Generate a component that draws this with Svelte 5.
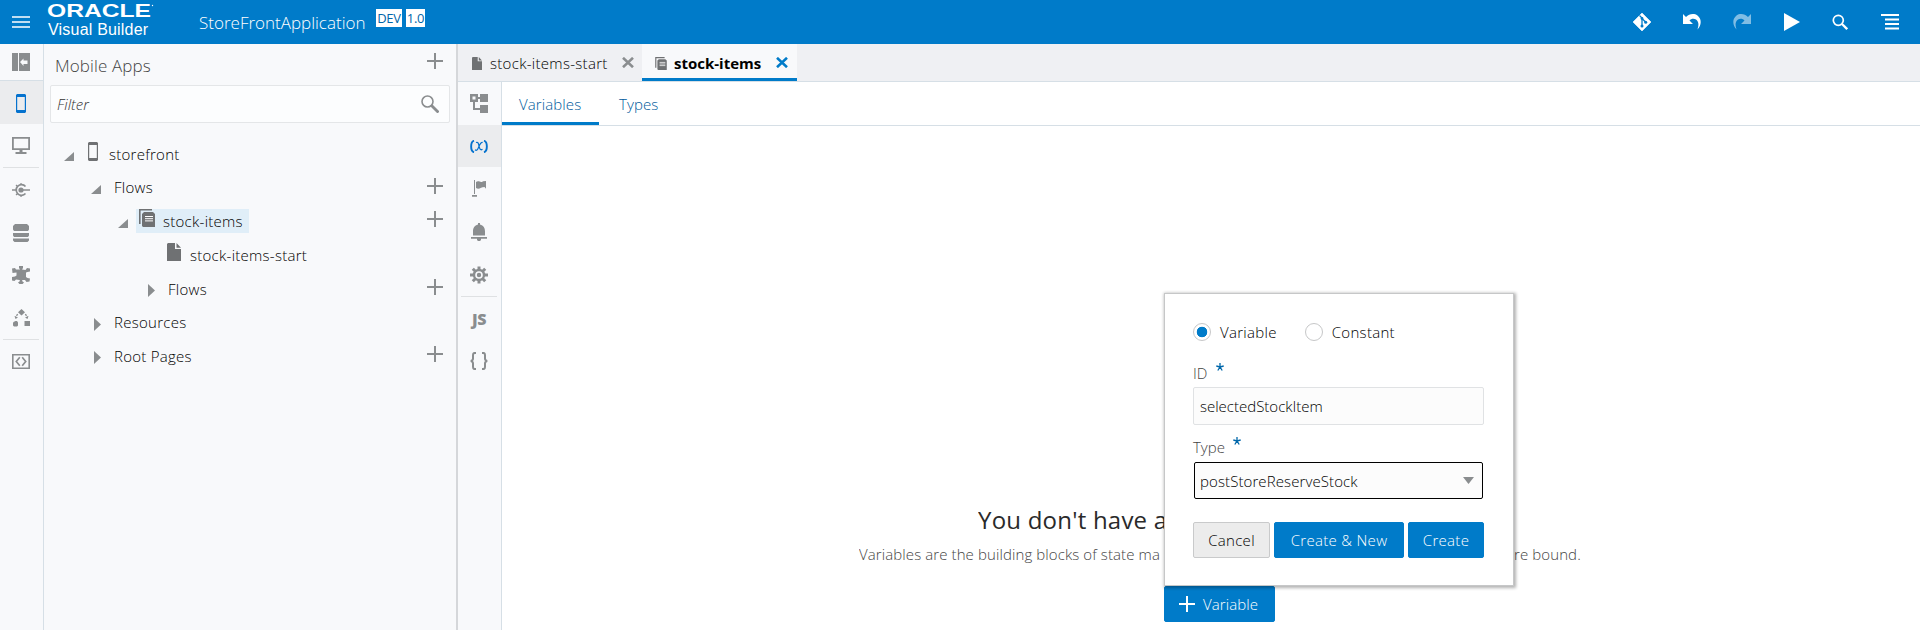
<script>
  let kind = $state('variable');
  let id = $state('selectedStockItem');
  const tree = [
    { label: 'storefront', pad: 20, open: true, icon: 'phone' },
    { label: 'Flows', pad: 47, open: true, plus: true },
    { label: 'stock-items', pad: 74, open: true, icon: 'flow', selected: true, plus: true },
    { label: 'stock-items-start', pad: 101, leaf: true, icon: 'page' },
    { label: 'Flows', pad: 101, open: false, plus: true },
    { label: 'Resources', pad: 47, open: false },
    { label: 'Root Pages', pad: 47, open: false, plus: true }
  ];
</script>

{#snippet plus()}
  <svg class="plus" width="16" height="16" viewBox="0 0 16 16"><path d="M7 0h2v7h7v2H9v7H7V9H0V7h7z" fill="currentColor" /></svg>
{/snippet}

{#snippet page(w, h)}
  <svg width={w} height={h} viewBox="0 0 14 18"><path d="M1 0h7v6h6v12H0V1zM9.500 0L14 4.700H9.500z" fill="currentColor" /></svg>
{/snippet}

{#snippet flow(w, h)}
  <svg width={w} height={h} viewBox="0 0 16 18">
    <path d="M.8 15V.8H13" fill="none" stroke="currentColor" stroke-width="1.6" />
    <path d="M5 3h9l2 2v13H4l-1-1V5z" fill="currentColor" />
    <path d="M6 7.500h8M6 9.700h8M6 11.900h8" stroke="#fff" stroke-width="1" />
  </svg>
{/snippet}

{#snippet phone()}
  <svg width="10" height="19" viewBox="0 0 10 19"><path fill-rule="evenodd" d="M1 0h8l1 1v17l-1 1H1l-1-1V1zM1.200 3v13h7.600V3z" fill="currentColor" /></svg>
{/snippet}

{#snippet cross()}
  <svg width="12" height="11" viewBox="0 0 12 11"><path d="M1 .8l10 9.400M11 .8L1 10.200" stroke="currentColor" stroke-width="2.600" /></svg>
{/snippet}

<div class="app">
  <header>
    <svg class="menu" width="18" height="12" viewBox="0 0 18 12"><path d="M0 1h18M0 6h18M0 11h18" stroke="#fff" stroke-width="1.700" /></svg>
    <div class="brand">
      <svg width="108" height="20" viewBox="0 0 108 20">
        <text x="0" y="15" textLength="104" lengthAdjust="spacingAndGlyphs" font-size="17.500" font-weight="700" fill="#fff">ORACLE</text>
        <circle cx="105.500" cy="3.500" r=".7" fill="#fff" />
      </svg>
      <span class="product">Visual Builder</span>
    </div>
    <span class="appname">StoreFrontApplication</span>
    <span class="badge dev">DEV</span>
    <span class="badge ver">1.0</span>
    <nav class="actions">
      <svg width="18" height="18" viewBox="0 0 18 18">
        <path d="M9 0l9 9-9 9-9-9z" fill="#fff" stroke="#fff" stroke-linejoin="round" stroke-width=".6" />
        <path d="M6.500 2.500L9 5v9M9 5.500l4 4" stroke="#007bc9" stroke-width="1.300" fill="none" />
        <circle cx="9" cy="5.500" r="1.400" fill="#007bc9" /><circle cx="9" cy="13" r="1.500" fill="#007bc9" /><circle cx="12.700" cy="9.200" r="1.500" fill="#007bc9" />
      </svg>
      <svg width="18" height="16" viewBox="0 0 18 16"><path d="M0 0l3 3C6-.2 11-1 14.500 1.500 19 5 18.500 11 14.500 15.500 16 11 15.800 7.500 13 5.500 11 4 8 4.500 6.500 6.500L10 10H0z" fill="#fff" /></svg>
      <svg class="faded" width="18" height="16" viewBox="0 0 18 16"><path transform="matrix(-1 0 0 1 18 0)" d="M0 0l3 3C6-.2 11-1 14.500 1.500 19 5 18.500 11 14.500 15.500 16 11 15.800 7.500 13 5.500 11 4 8 4.500 6.500 6.500L10 10H0z" fill="#fff" /></svg>
      <svg width="16" height="18" viewBox="0 0 16 18"><path d="M0 0l16 9L0 18z" fill="#fff" /></svg>
      <svg width="16" height="16" viewBox="0 0 16 16"><circle cx="6.300" cy="6.300" r="5" fill="none" stroke="#fff" stroke-width="1.700" /><path d="M10 10l5.200 5.200" stroke="#fff" stroke-width="2.300" /></svg>
      <svg width="18" height="16" viewBox="0 0 18 16"><path d="M0 1h18M4 5.500h14M4 10h14M4 14.500h14" stroke="#fff" stroke-width="1.800" /></svg>
    </nav>
  </header>

  <div class="body">
    <aside class="rail">
      <div class="cell top">
        <svg width="18" height="18" viewBox="0 0 18 18"><path fill-rule="evenodd" d="M0 0h6v18H0zM7 0h11v18H7zM8 9l3.500-3.500V7.500h4v3.500h-4v2z" fill="currentColor" /></svg>
      </div>
      <div class="cell active device">{@render phone()}</div>
      <div class="cell">
        <svg width="18" height="17" viewBox="0 0 18 17"><path fill-rule="evenodd" d="M0 0h18v13H0zM1.800 1.800v9.400h14.400V1.800zM7.500 13h3v2h-3zM3.500 15h11v2h-11z" fill="currentColor" /></svg>
      </div>
      <hr />
      <div class="cell">
        <svg width="18" height="14" viewBox="0 0 18 14"><path d="M0 7h4M9 7h9" stroke="currentColor" stroke-width="1.300" /><path d="M13.500 3.500A5.300 5.300 0 1 0 13.500 10.500" fill="none" stroke="currentColor" stroke-width="1.700" /><circle cx="9" cy="7" r="2.600" fill="currentColor" /><path d="M9 0v2M9 12v2M4 2l1.500 1.500M4 12l1.500-1.500" stroke="currentColor" stroke-width="1.200" /></svg>
      </div>
      <div class="cell">
        <svg width="16" height="18" viewBox="0 0 16 18"><path d="M2 0h12l2 2v3.500l-1 1.500H1L0 5.500V2zM0 9h16v2.500l-1 1.500H1l-1-1.500zM0 14.500h16v2L14.500 18h-13L0 16.500z" fill="currentColor" /></svg>
      </div>
      <div class="cell short">
        <svg width="18" height="18" viewBox="0 0 18 18"><path d="M7 0h4v2l-1 1.500 3.500.5L15 2l3 .5V5.500L15.500 6 14 6.500v4.500l1.500 1 2.500.5-.5 3-3 .5-1.500-2H10.500L10 15l2 1.500-1.500 1.500h-3L6 16.500 8 15l-.5-1L4 13.500 2.500 15 0 14.500V11l3-.5 1.500-1V6.500L.5 7 0 2.500 3 2l1 1.500h4L7 2z" fill="currentColor" /></svg>
      </div>
      <div class="cell">
        <svg width="17" height="18" viewBox="0 0 17 18"><path d="M8.500 0L12 3.300 8.500 6.600 5 3.300zM.500 13L2.500 12h1.500l1 1.500v3L4 17.500H1L0 16.500V14zM11.500 12h5.500v5H11.500z" fill="currentColor" /><path d="M4.700 5.200L2.500 8M12.300 5.200L14.500 8" stroke="currentColor" stroke-width="1.300" stroke-dasharray="2 1" /><path d="M1.500 7l1 3 2.500-1.500zM15.500 7l-1 3L12 8.500z" fill="currentColor" /></svg>
      </div>
      <hr />
      <div class="cell short">
        <svg width="18" height="15" viewBox="0 0 18 15"><path d="M.8.800h16.400v13.400H.8z" fill="none" stroke="currentColor" stroke-width="1.600" /><path d="M7.800 3.300L4.300 7.500l3.500 4.200M10.200 3.300l3.500 4.200-3.500 4.200" fill="none" stroke="currentColor" stroke-width="1.700" /></svg>
      </div>
    </aside>

    <section class="panel">
      <div class="title"><span>Mobile Apps</span>{@render plus()}</div>
      <div class="filter">
        <span>Filter</span>
        <svg width="18" height="18" viewBox="0 0 18 18"><circle cx="6.500" cy="6.500" r="5.500" fill="none" stroke="#8a8d8f" stroke-width="1.600" /><path d="M10.500 10.500l7 7" stroke="#8a8d8f" stroke-width="2.800" /></svg>
      </div>
      <ul>
        {#each tree as n}
          <li style:padding-left="{n.pad}px">
            <span class="arrow" class:shut={!n.open}>
              {#if n.leaf}
                <i></i>
              {:else if n.open}
                <svg width="10" height="9" viewBox="0 0 10 9"><path d="M10 0v9H0z" fill="#8a8d8f" /></svg>
              {:else}
                <svg width="7" height="13" viewBox="0 0 7 13"><path d="M0 0l7 6.500L0 13z" fill="#8a8d8f" /></svg>
              {/if}
            </span>
            <span class="node" class:selected={n.selected} class:plain={!n.icon}>
              {#if n.icon}
                <span class="ic {n.icon}">
                  {#if n.icon === 'phone'}{@render phone()}{:else if n.icon === 'flow'}{@render flow(16, 18)}{:else}{@render page(14, 18)}{/if}
                </span>
              {/if}
              <span class="label">{n.label}</span>
            </span>
            {#if n.plus}{@render plus()}{/if}
          </li>
        {/each}
      </ul>
    </section>

    <main>
      <div class="tabs">
        <div class="tab">{@render page(10, 13)}<span class="t1">stock-items-start</span>{@render cross()}</div>
        <div class="tab on">{@render flow(12, 13)}<span class="t2">stock-items</span>{@render cross()}</div>
      </div>
      <div class="work">
        <aside class="rail inner">
          <div class="cell">
            <svg width="18" height="19" viewBox="0 0 18 19"><path fill-rule="evenodd" d="M0 0h8v3h2V0h8v8h-8V5H8v3H5v6h5v-3h8v8h-8v-3H3V8H0zM2.500 2.500v3h3v-3z" fill="currentColor" /></svg>
          </div>
          <div class="cell active short">
            <svg width="18" height="13" viewBox="0 0 18 13"><path d="M4 .7C.2 2 .2 11 4 12.300M14 .7c3.800 1.300 3.800 10.300 0 11.600" fill="none" stroke="currentColor" stroke-width="1.900" /><path d="M6 2.500C8.500 1.500 8.500 4 9 6s1 5 3.500 3.200M12.700 2.500C10.700 2 9.500 5 8.500 7.500S6.500 11 5 9.800" fill="none" stroke="currentColor" stroke-width="1.200" /></svg>
          </div>
          <div class="cell">
            <svg width="14" height="17" viewBox="0 0 14 17"><path d="M2 0h1v14H2zM0 15h5v1.800H0zM4 2C7 0 8.500 3.500 11 1.200L14 1v7.800L12.500 7C9 7 7 10 4 8z" fill="currentColor" /></svg>
          </div>
          <div class="cell">
            <svg width="16" height="18" viewBox="0 0 16 18"><path d="M7 0h2v1.500c3.500.8 5 3.500 5 7V12.500H2V8.500c0-3.500 1.500-6.200 5-7zM0 14h16v1.700h-6V17L9 18H7l-1-1v-1.300H0z" fill="currentColor" /></svg>
          </div>
          <div class="cell">
            <svg width="18" height="18" viewBox="0 0 18 18"><path d="M9 .5v17M0 9h18M2.800 2.800l12.400 12.400M15.200 2.800L2.800 15.200" stroke="currentColor" stroke-width="3" /><circle cx="9" cy="9" r="6.200" fill="currentColor" /><circle cx="9" cy="9" r="3" fill="currentColor" stroke="#f8f9fb" stroke-width="1.600" /></svg>
          </div>
          <hr />
          <div class="cell js">JS</div>
          <div class="cell short">
            <svg width="18" height="18" viewBox="0 0 18 18"><path d="M6 .9H4.800Q3 .9 3 3v3.500Q3 8.500.8 9 3 9.500 3 11.500V15q0 2.100 1.800 2.100H6M12 .9h1.200Q15 .9 15 3v3.500q0 2 2.200 2.500-2.200.5-2.200 2.500V15q0 2.100-1.800 2.100H12" fill="none" stroke="currentColor" stroke-width="2" /></svg>
          </div>
        </aside>
        <div class="content">
          <div class="subtabs"><span class="on">Variables</span><span class="types">Types</span></div>
          <div class="empty">
            <h1>You don't have a</h1>
            <p><span class="lead">Variables are the building blocks of state ma</span><span>re bound.</span></p>
            <button class="primary add">{@render plus()}<span>Variable</span></button>
          </div>
        </div>
      </div>
    </main>
  </div>

  <div class="dialog">
    <div class="radios">
      <label><input type="radio" bind:group={kind} value="variable" /><span>Variable</span></label>
      <label><input type="radio" bind:group={kind} value="constant" /><span>Constant</span></label>
    </div>
    <div class="lab"><span>ID</span>
      <svg width="8" height="8" viewBox="0 0 8 8"><path d="M4 0v4M.3 3L4 4l3.700-1M1.800 7.500L4 4l2.200 3.500" fill="none" stroke="#0067aa" stroke-width="1.300" /></svg>
    </div>
    <input class="field" bind:value={id} />
    <div class="lab two"><span>Type</span>
      <svg width="8" height="8" viewBox="0 0 8 8"><path d="M4 0v4M.3 3L4 4l3.700-1M1.800 7.500L4 4l2.200 3.500" fill="none" stroke="#0067aa" stroke-width="1.300" /></svg>
    </div>
    <div class="select"><span>postStoreReserveStock</span>
      <svg width="11" height="7" viewBox="0 0 11 7"><path d="M0 0h11L5.500 7z" fill="#8a8d8f" /></svg>
    </div>
    <div class="buttons">
      <button class="cancel">Cancel</button>
      <button class="primary cn">Create &amp; New</button>
      <button class="primary cr">Create</button>
    </div>
  </div>
</div>

<style>
  :global(body) { margin: 0; }
  * { box-sizing: border-box; }
  svg { display: block; flex: none; }
  .app { position: relative; width: 1920px; height: 630px; overflow: hidden; display: flex; flex-direction: column; background: #fff; font: 300 15px/20px "Open Sans", "Noto Sans", sans-serif; color: #000; }
  span { white-space: nowrap; }
  header { height: 44px; background: #007bc9; color: #fff; display: flex; flex: none; align-items: flex-start; }
  .menu { margin: 16px 17px 0 12px; }
  .brand { width: 152px; padding-top: 2px; font-family: "Liberation Sans", sans-serif; font-weight: 400; }
  .brand text { font-family: "Liberation Sans", sans-serif; }
  .product { display: block; font-size: 16px; line-height: 18px; margin: -1px 0 0 1px; letter-spacing: .2px; }
  .appname { width: 177px; font-size: 17px; line-height: 24px; margin-top: 11px; }
  .badge { height: 18px; margin-top: 9px; background: #fff; color: #0067aa; font-size: 13px; line-height: 18px; font-weight: 400; text-align: center; }
  .dev { width: 26px; margin-right: 4px; }
  .dev, .ver { letter-spacing: -0.3px; }
  .ver { width: 19px; }
  .actions { margin-left: auto; height: 43px; padding-right: 21px; display: flex; align-items: center; gap: 32px; }
  .actions svg:nth-child(5) { margin-right: 1px; }
  .actions svg:nth-child(3) { margin-right: 1px; }
  .faded { opacity: .5; }
  .body { flex: 1; display: flex; min-height: 0; }
  .rail { width: 44px; flex: none; background: #f8f9fb; border-right: 1px solid #d6dfe6; color: #8a8d8f; }
  .cell { height: 43px; display: flex; align-items: center; justify-content: center; padding-right: 1px; }
  .cell.top { height: 37px; border-bottom: 1px solid #d6dfe6; }
  .cell.active { background: #ebecee; color: #0572ce; }
  .cell.device { padding-top: 2px; }
  .cell.short { height: 42px; }
  .js { font: 800 16px/20px "Open Sans", sans-serif; letter-spacing: -.5px; }
  hr { margin: 0 4px 0 3px; border: 0; height: 1px; background: #dfe1e3; }
  .panel { width: 414px; flex: none; background: #f8f9fb; border-right: 2px solid #d5d7da; }
  .title { height: 41px; padding: 9px 13px 0 11px; display: flex; justify-content: space-between; color: #444; font-size: 17px; line-height: 26px; letter-spacing: .1px; }
  .plus { color: #8a8d8f; }
  .filter { margin: 0 6px; height: 38px; border: 1px solid #e4e6e8; border-radius: 2px; background: #fcfdfe; padding: 0 10px 0 6px; display: flex; align-items: center; justify-content: space-between; font-style: italic; color: #333; }
  ul { list-style: none; margin: 14px 0 0; padding: 0; }
  li { height: 33.700px; padding-right: 13px; display: flex; align-items: center; letter-spacing: .27px; }
  li > :global(.plus) { margin: -4px 0 0 auto; }
  li:nth-child(2) .node { margin-top: -2px; }
  li:nth-child(2) .arrow { margin-top: -2px; }
  .arrow { width: 18px; padding-top: 5px; display: flex; }
  .arrow.shut { padding: 4px 0 0 3px; }
  .node { height: 24px; display: flex; align-items: center; padding: 0 6px 0 3px; }
  .node.plain { padding-left: 5px; }
  .selected { background: #e0eef8; }
  .ic { height: 19px; margin-top: -5px; color: #6f7173; width: 24px; }
  .ic.page { padding-left: 1px; }
  .ic.phone { width: 24px; padding-left: 3px; }
  main { flex: 1; min-width: 0; display: flex; flex-direction: column; }
  .tabs { height: 38px; flex: none; display: flex; background: #eff0f3; border-bottom: 1px solid #d6dfe6; color: #6f7173; }
  .tab { width: 184px; height: 37px; display: flex; align-items: center; padding: 1px 8px 0 14px; }
  .tab span { color: #000; margin: 0 auto 0 8px; }
  .t1 { letter-spacing: .3px; }
  .tab.on { width: 155px; height: 37px; background: #f8f9fb; border-bottom: 3px solid #007bc9; padding: 4px 9px 0 13px; font-weight: 700; }
  .tab.on .t2 { margin-left: 7px; }
  .tab :global(svg:last-child) { color: #8a8d8f; margin-top: -1px; }
  .tab.on :global(svg:last-child) { color: #007bc9; }
  .work { flex: 1; display: flex; min-height: 0; }
  .content { flex: 1; display: flex; flex-direction: column; }
  .subtabs { height: 44px; border-bottom: 1px solid #d6dfe6; display: flex; color: #005a9c; line-height: 44px; letter-spacing: .1px; }
  .subtabs .on { width: 97px; height: 43px; border-bottom: 3px solid #007bc9; padding-left: 17px; }
  .types { padding-left: 20px; }
  .empty { flex: 1; padding-top: 376px; display: flex; flex-direction: column; align-items: flex-start; }
  h1 { margin: 0 0 0 476px; width: 186px; overflow: hidden; font-size: 24px; line-height: 36px; font-weight: 400; color: #2a2a2a; white-space: nowrap; letter-spacing: .22px; }
  p { margin: 6px 0 0 357px; font-size: 15px; line-height: 20px; color: #444; display: flex; gap: 350px; letter-spacing: .1px; }
  .lead { width: 305px; overflow: hidden; }
  button { font: inherit; height: 36px; padding: 0; border: 1px solid #c9cacb; border-radius: 2px; background: #ececec; color: #000; white-space: nowrap; letter-spacing: .3px; }
  .primary { background: #007bc9; border-color: #007bc9; color: #fff; }
  .add { width: 111px; margin: 22px 0 0 662px; display: flex; align-items: center; padding-left: 14px; gap: 8px; letter-spacing: .1px; }
  .add :global(.plus) { color: #fff; }
  .dialog { position: absolute; left: 1164px; top: 293px; width: 350px; height: 293px; background: #fff; border: 1px solid #c6c7c8; box-shadow: 1px 1px 3px 1px rgba(0, 0, 0, .3); padding: 28px 29px 0 28px; }
  .radios { display: flex; gap: 28px; height: 20px; letter-spacing: .3px; }
  label { display: flex; align-items: center; gap: 9px; }
  input[type='radio'] { appearance: none; margin: 0; width: 18px; height: 18px; border: 1px solid #c6c7c8; border-radius: 50%; background: #fff; }
  input[type='radio']:checked { background: radial-gradient(circle, #007bc9 5px, #fff 5.600px); }
  .lab { display: flex; gap: 9px; margin-top: 19px; height: 26px; color: #444; line-height: 24px; }
  .lab svg { margin-top: 2px; }
  .field { display: block; width: 291px; height: 38px; border: 1px solid #e0e2e4; border-radius: 2px; background: #fcfcfc; padding: 0 6px; font: inherit; color: #000; outline: none; }
  .lab.two { margin-top: 10px; height: 27px; gap: 8px; }
  .select { margin: 0 1px; height: 37px; border: 1.500px solid #000; border-radius: 2px; background: #fcfcfc; padding: 0 8px 0 5px; display: flex; align-items: center; justify-content: space-between; color: #000; letter-spacing: .1px; }
  .buttons { display: flex; gap: 4px; margin-top: 23px; }
  .cancel { width: 77px; } .cn { width: 130px; } .cr { width: 76px; }
</style>
